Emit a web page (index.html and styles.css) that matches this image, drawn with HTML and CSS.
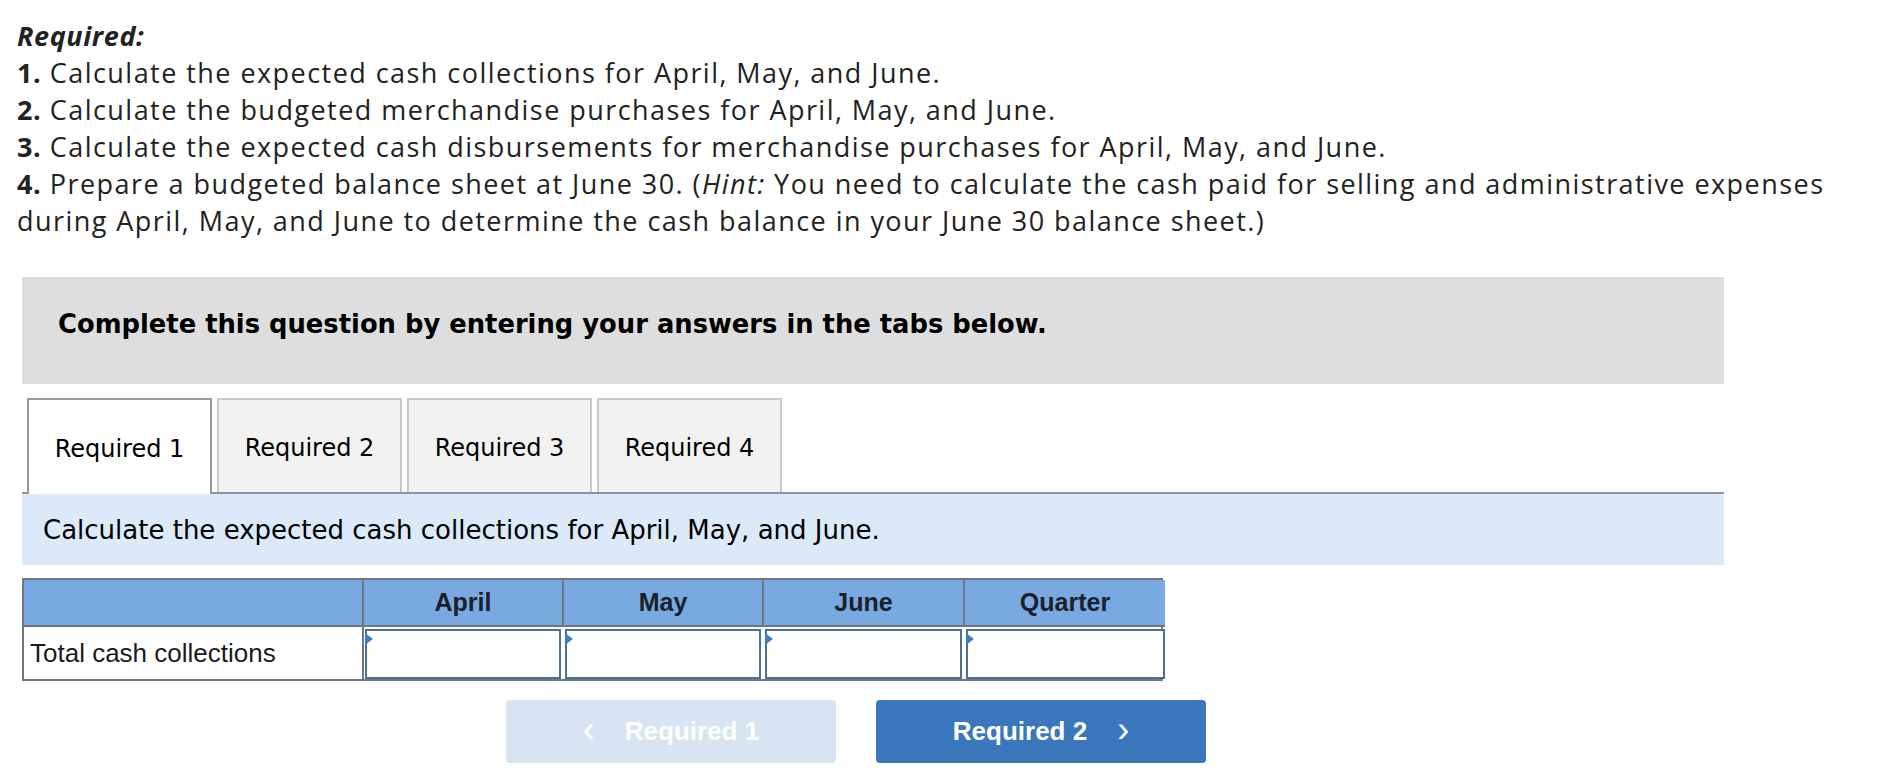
FILE: index.html
```html
<!DOCTYPE html>
<html lang="en">
<head>
<meta charset="utf-8">
<title>Required</title>
<link rel="stylesheet" href="styles.css">
</head>
<body>
<div class="page">
  <div class="reqs">
    <div class="req-title">Required:</div>
    <div><b>1.</b> Calculate the expected cash collections for April, May, and June.</div>
    <div><b>2.</b> Calculate the budgeted merchandise purchases for April, May, and June.</div>
    <div><b>3.</b> Calculate the expected cash disbursements for merchandise purchases for April, May, and June.</div>
    <div><b>4.</b> Prepare a budgeted balance sheet at June 30. (<i>Hint:</i> You need to calculate the cash paid for selling and administrative expenses during April, May, and June to determine the cash balance in your June 30 balance sheet.)</div>
  </div>

  <div class="panel">
    <div class="notice">Complete this question by entering your answers in the tabs below.</div>

    <div class="tabs">
      <div class="tab active">Required 1</div>
      <div class="tab">Required 2</div>
      <div class="tab">Required 3</div>
      <div class="tab">Required 4</div>
    </div>

    <div class="instr">Calculate the expected cash collections for April, May, and June.</div>

    <div class="grid">
      <div class="hcell"></div>
      <div class="hcell">April</div>
      <div class="hcell">May</div>
      <div class="hcell">June</div>
      <div class="hcell last">Quarter</div>
      <div class="label">Total cash collections</div>
      <div class="inp"><span class="mark"></span></div>
      <div class="inp"><span class="mark"></span></div>
      <div class="inp"><span class="mark"></span></div>
      <div class="inp last"><span class="mark"></span></div>
    </div>

    <div class="nav">
      <div class="btn disabled"><span class="chev">&lsaquo;</span>Required 1</div>
      <div class="btn primary">Required 2<span class="chev right">&rsaquo;</span></div>
    </div>
  </div>
</div>
</body>
</html>
```

FILE: styles.css
```css
html, body {
  margin: 0;
  padding: 0;
  background: #ffffff;
}

.page {
  padding: 17px 0 0 17px;
}

.reqs {
  font-family: "Open Sans", "Lato", sans-serif;
  font-size: 27px;
  letter-spacing: 1.45px;
  line-height: 37px;
  color: #222222;
  width: 1850px;
}

.req-title {
  font-weight: 700;
  font-style: italic;
  letter-spacing: 0.6px;
}

.reqs b {
  font-weight: 700;
  letter-spacing: 0.6px;
}

.panel {
  margin: 38px 0 0 5px;
  width: 1702px;
}

.notice {
  background: #dedede;
  height: 107px;
  box-sizing: border-box;
  padding: 0 0 14px 36px;
  display: flex;
  align-items: center;
  font-family: "DejaVu Sans", Verdana, sans-serif;
  font-weight: 700;
  font-size: 25.8px;
  color: #000000;
}

.tabs {
  margin-top: 14px;
  display: flex;
  gap: 5px;
  padding-left: 5px;
  border-bottom: 2px solid #8c9399;
  height: 96px;
  box-sizing: border-box;
}

.tab {
  width: 185px;
  box-sizing: border-box;
  border: 2px solid #c9c9c9;
  border-bottom: none;
  background: #f2f2f2;
  display: flex;
  align-items: center;
  justify-content: center;
  font-family: "DejaVu Sans", Verdana, sans-serif;
  font-size: 24px;
  color: #000000;
  padding-top: 4px;
}

.tab.active {
  background: #ffffff;
  border-color: #9a9a9a;
  height: 96px;
  position: relative;
  z-index: 1;
}

.instr {
  background: #dbe9f8;
  height: 71px;
  box-sizing: border-box;
  padding-left: 21px;
  display: flex;
  align-items: center;
  font-family: "DejaVu Sans", Verdana, sans-serif;
  font-size: 26px;
  color: #000000;
}

.grid {
  margin-top: 13px;
  display: grid;
  grid-template-columns: 340px 200px 200px 201px 200px;
  grid-template-rows: 47px 52px;
  width: 1141px;
  box-sizing: border-box;
  border: 2px solid #6f7780;
  font-family: "Liberation Sans", Arial, sans-serif;
}

.hcell {
  background: #78a9e1;
  border-right: 2px solid #6f7780;
  border-bottom: 2px solid #6f7780;
  display: flex;
  align-items: center;
  justify-content: center;
  font-weight: 700;
  font-size: 25px;
  color: #1b1f2a;
}

.hcell.last {
  border-right: none;
}

.label {
  display: flex;
  align-items: center;
  padding-left: 6px;
  font-size: 26px;
  color: #1b1b1b;
  border-right: 2px solid #6f7780;
}

.inp {
  position: relative;
  background: #ffffff;
  border: 2px solid #4a6f9a;
  margin: 2px 3px 0 1px;
}

.inp.last {
  margin-right: 0;
}

.mark {
  position: absolute;
  left: -2px;
  top: 2px;
  width: 0;
  height: 0;
  border-top: 6px solid transparent;
  border-bottom: 6px solid transparent;
  border-left: 8px solid #3a7cc6;
}

.nav {
  margin: 19px 0 0 484px;
  display: flex;
  gap: 40px;
}

.btn {
  width: 330px;
  height: 63px;
  border-radius: 4px;
  display: flex;
  align-items: center;
  justify-content: center;
  font-family: "Liberation Sans", Arial, sans-serif;
  font-weight: 700;
  font-size: 26px;
  color: #ffffff;
}

.btn.disabled {
  background: #d8e4f1;
}

.btn.primary {
  background: #3a77bc;
}

.chev {
  font-weight: 400;
  font-size: 36px;
  line-height: 1;
  margin-right: 30px;
  position: relative;
  top: -2px;
}

.chev.right {
  margin-right: 0;
  margin-left: 30px;
}
```
